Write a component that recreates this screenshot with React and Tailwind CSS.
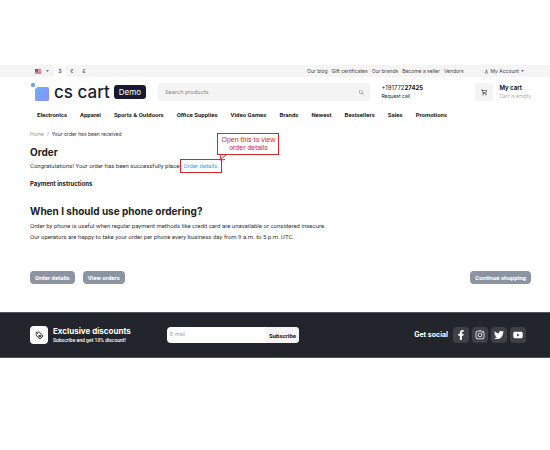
import { useState } from "react"
import { FaFacebookF, FaInstagram, FaTwitter, FaYoutube } from "react-icons/fa"
import { MdOutlineLoyalty, MdOutlineShoppingCart, MdPersonOutline, MdSearch } from "react-icons/md"

const CURRENCIES = ["$", "€", "£"]

const TOP_LINKS = ["Our blog", "Gift certificates", "Our brands", "Become a seller", "Vendors"]

const CATEGORIES = [
    "Electronics",
    "Apparel",
    "Sports & Outdoors",
    "Office Supplies",
    "Video Games",
    "Brands",
    "Newest",
    "Bestsellers",
    "Sales",
    "Promotions"
]

const SOCIALS = [
    { name: "Facebook", Icon: FaFacebookF },
    { name: "Instagram", Icon: FaInstagram },
    { name: "Twitter", Icon: FaTwitter },
    { name: "YouTube", Icon: FaYoutube }
]

function Caret() {
    return (
        <svg viewBox="0 0 4 2" className="w-[3px] h-[2px]" fill="currentColor">
            <path d="M0 0h4L2 2z" />
        </svg>
    )
}

function FlagUS() {
    return (
        <svg viewBox="0 0 12 10" className="w-[6px] h-[5px]">
            <rect width="12" height="10" fill="#eeb7bd" />
            <path d="M0 1h12M0 4h12M0 7h12M0 9.5h12" stroke="#c9505f" strokeWidth="1.2" />
            <rect width="6" height="5.5" fill="#5c6390" />
        </svg>
    )
}

function Logo() {
    return (
        <a href="#" className="flex items-center">
            <svg viewBox="0 0 20 20" className="w-[20px] h-[20px]">
                <defs>
                    <linearGradient id="logo" x1="0" y1="0" x2="1" y2="1">
                        <stop offset="0" stopColor="#69b0fd" />
                        <stop offset="1" stopColor="#8e8ffa" />
                    </linearGradient>
                </defs>
                <circle cx="3" cy="3" r="2.2" fill="#7d9fe6" />
                <path d="M7 5h10.500a1.500 1.500 0 0 1 1.500 1.500V17.500a1.500 1.500 0 0 1-1.500 1.500H6.500A1.500 1.500 0 0 1 5 17.500V7a3 3 0 0 0 2-2z" fill="url(#logo)" />
            </svg>
            <span className="ml-[4px] text-[17px] leading-[18px] font-medium text-[#1d2030]">cs cart</span>
            <span className="ml-[4px] rounded-[3px] bg-[#171b31] px-[5px] text-[8px] leading-[14px] text-white">Demo</span>
        </a>
    )
}

function TopBar({ currency, setCurrency }) {
    return (
        <div className="bg-[#f4f4f4] text-[5px] leading-[12px] text-[#444]">
            <div className="mr-[19px] ml-[30px] flex h-[12px] items-center">
                <button type="button" aria-label="Language" className="flex w-[24px] items-center gap-[5px] pl-[5px]">
                    <FlagUS />
                    <Caret />
                </button>
                {CURRENCIES.map((c) => (
                    <button
                        key={c}
                        type="button"
                        onClick={() => setCurrency(c)}
                        className={c === currency ? "w-[12px] bg-white" : "w-[12px]"}
                    >
                        {c}
                    </button>
                ))}
                <nav className="ml-auto flex gap-[4px]">
                    {TOP_LINKS.map((link) => (
                        <a key={link} href="#">{link}</a>
                    ))}
                </nav>
                <button type="button" className="ml-[20px] mr-[7px] flex items-center gap-[2px]">
                    <MdPersonOutline size={5} />
                    My Account
                    <Caret />
                </button>
            </div>
        </div>
    )
}

function Header() {
    return (
        <header className="mt-[5px] mr-[19px] ml-[30px] flex items-center">
            <Logo />
            <form className="ml-[12px] flex h-[18px] flex-1 items-center rounded-[3px] bg-[#f4f4f4] pr-[5px] pl-[7px]">
                <input
                    type="text"
                    aria-label="Search products"
                    placeholder="Search products"
                    className="min-w-0 flex-1 bg-transparent font-['Roboto',sans-serif] text-[6px] leading-[8px] outline-none placeholder:text-[#8c8c8c]"
                />
                <button type="button" aria-label="Search" className="text-[#888]">
                    <MdSearch size={7} />
                </button>
            </form>
            <div className="ml-[11px] w-[94px] text-[#222]">
                <p className="text-[6px] leading-[8px]">+191772<b>27425</b></p>
                <a href="#" className="block text-[5px] leading-[8px]">Request call</a>
            </div>
            <button type="button" className="flex items-center gap-[6px] text-left">
                <span className="flex h-[18px] w-[18px] items-center justify-center rounded-[3px] bg-[#f4f4f4] text-[#222]">
                    <MdOutlineShoppingCart size={7} />
                </span>
                <span>
                    <span className="block text-[6px] leading-[8px] font-bold text-[#222]">My cart</span>
                    <span className="block text-[5px] leading-[8px] text-[#aaa]">Cart is empty</span>
                </span>
            </button>
        </header>
    )
}

function ActionButton({ children }) {
    return (
        <button type="button" className="h-[13px] rounded-[4px] bg-[#8b95a1] px-[5px] font-['Roboto',sans-serif] text-[6px] leading-[13px] font-bold text-white">
            {children}
        </button>
    )
}

function Footer() {
    return (
        <footer className="mt-[28px] border-y border-[#55575c] bg-[#23252c] pr-[19px] pl-[30px] text-white">
            <div className="flex h-[44px] items-center">
                <span className="flex h-[18px] w-[18px] items-center justify-center rounded-[4px] bg-white text-[#222]">
                    <MdOutlineLoyalty size={9} />
                </span>
                <div className="ml-[5px] w-[114px]">
                    <p className="text-[8px] leading-[10px] font-bold">Exclusive discounts</p>
                    <p className="font-['Roboto',sans-serif] text-[5px] leading-[8px] font-medium">Subscribe and get 10% discount!</p>
                </div>
                <form className="flex h-[16px] w-[132px] overflow-hidden rounded-[4px] bg-white">
                    <input
                        type="email"
                        aria-label="E-mail"
                        placeholder="E-mail"
                        className="min-w-0 flex-1 px-[3px] text-[5px] text-[#222] outline-none placeholder:text-[#999]"
                    />
                    <button type="button" className="bg-[#f4f4f4] px-[3px] font-['Roboto',sans-serif] text-[6px] font-bold text-[#222]">Subscribe</button>
                </form>
                <div className="ml-auto mr-[5px] flex items-center gap-[3px]">
                    <span className="mr-[2px] text-[7px] leading-[10px] font-bold">Get social</span>
                    {SOCIALS.map(({ name, Icon }) => (
                        <a key={name} href="#" aria-label={name} className="flex h-[16px] w-[16px] items-center justify-center rounded-[4px] bg-[#3f4046]">
                            <Icon size={10} />
                        </a>
                    ))}
                </div>
            </div>
        </footer>
    )
}

export default function App() {
    const [currency, setCurrency] = useState("$")

    return (
        <div className="min-h-screen bg-white pt-[65px] font-['Inter',sans-serif] text-[#333]">
            <TopBar currency={currency} setCurrency={setCurrency} />
            <Header />

            <nav className="mx-[37px] mt-[9px] flex gap-[13px] font-['Roboto',sans-serif] text-[6px] leading-[8px] font-bold whitespace-nowrap text-[#222]">
                {CATEGORIES.map((category) => (
                    <a key={category} href="#">{category}</a>
                ))}
            </nav>

            <main className="mt-[11px] mr-[19px] ml-[30px] font-['Roboto',sans-serif] text-[6px]">
                <p className="flex gap-[3px] font-['Inter',sans-serif] text-[5px] leading-[8px]">
                    <a href="#" className="text-[#999]">Home</a>
                    <span className="text-[#999]">/</span>
                    <span>Your order has been received</span>
                </p>
                <h1 className="mt-[8px] font-['Inter',sans-serif] text-[10px] leading-[12px] font-bold text-[#222]">Order</h1>
                <p className="mt-[3px] flex leading-[10px]">
                    Congratulations! Your order has been successfully placed.
                    <span className="relative">
                        <a href="#" className="-my-[2px] -ml-[4px] block border border-[#d22630] bg-white px-[2px] leading-[12px] text-[#3b9fd0]">Order details.</a>

                        {/* Callout with its arrow */}
                        <span className="absolute bottom-[16px] left-[33px] w-[62px] border border-[#d22630] bg-white py-[2px] text-center font-['Liberation_Sans',sans-serif] text-[7px] leading-[8px] text-[#d22630]">
                            Open this to view order details
                        </span>
                        <svg viewBox="0 0 10 8" className="absolute bottom-[10px] left-[34px] h-[8px] w-[10px]" fill="none" stroke="#d22630">
                            <path d="M9 1L3 6M3 2L2 7l5-.5" />
                        </svg>
                    </span>
                </p>
                <h2 className="mt-[9px] font-['Inter',sans-serif] text-[6px] leading-[8px] font-bold text-[#222]">Payment instructions</h2>

                <h2 className="mt-[16px] font-['Inter',sans-serif] text-[10px] leading-[14px] font-bold text-[#222]">When I should use phone ordering?</h2>
                <div className="mt-[2px] leading-[11px]">
                    <p>Order by phone is useful when regular payment methods like credit card are unavailable or considered insecure.</p>
                    <p>Our operators are happy to take your order per phone every business day from 9 a.m. to 5 p.m. UTC.</p>
                </div>

                <div className="mt-[29px] flex gap-[8px]">
                    <ActionButton>Order details</ActionButton>
                    <ActionButton>View orders</ActionButton>
                    <span className="flex-1" />
                    <ActionButton>Continue shopping</ActionButton>
                </div>
            </main>

            <Footer />
        </div>
    )
}
